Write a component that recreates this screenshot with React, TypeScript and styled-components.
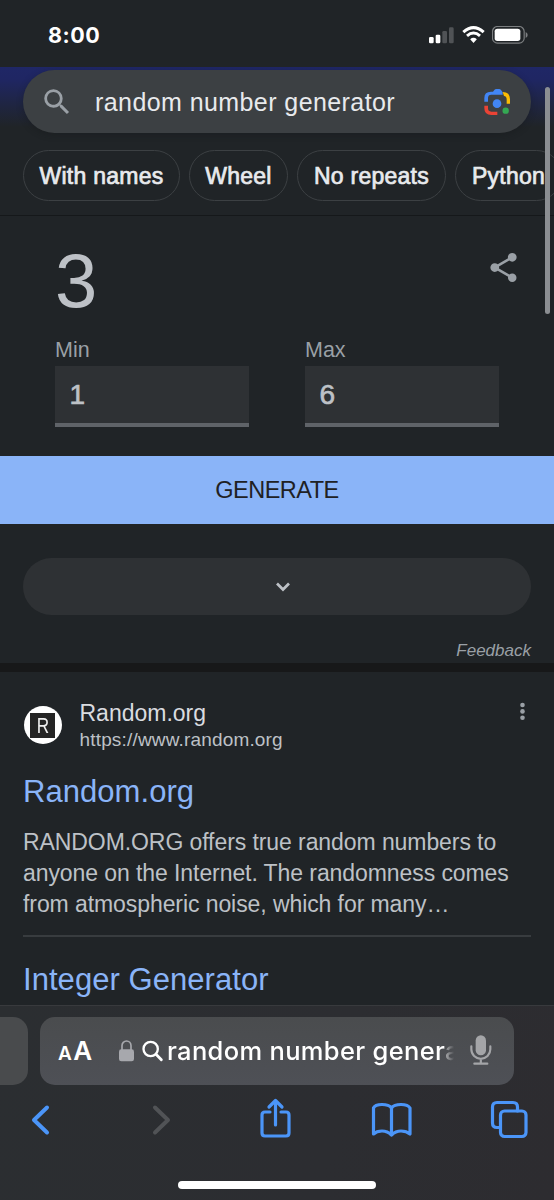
import React from 'react';
import styled, { createGlobalStyle } from 'styled-components';

const sans = '"Liberation Sans", Arial, sans-serif';
const system = 'Inter, "Liberation Sans", sans-serif';

const GlobalStyle = createGlobalStyle`
  *, *::before, *::after { box-sizing: border-box; }
  html, body { margin: 0; padding: 0; background: #202427; }
  body { overflow: hidden; font-family: ${sans}; }
  svg { display: block; flex: none; }
  button { appearance: none; border: 0; padding: 0; background: none; font: inherit; color: inherit; }
`;

const Phone = styled.div`
  position: relative;
  display: flex;
  flex-direction: column;
  width: 554px;
  height: 1200px;
  overflow: hidden;
  background: #202427;
`;

const StatusBar = styled.header`
  display: flex;
  flex: none;
  align-items: center;
  justify-content: space-between;
  height: 67px;
  padding: 3px 26px 0 48px;
`;

const Clock = styled.time`
  font: 700 21.5px/26px ${system};
  letter-spacing: 0.5px;
  color: #fff;
`;

const StatusIcons = styled.div`
  display: flex;
  align-items: center;
  gap: 7.5px;
`;

const Page = styled.main`
  display: flex;
  flex: 1;
  flex-direction: column;
  min-height: 0;
  overflow: hidden;
`;

const Masthead = styled.div`
  flex: none;
  height: 149px;
  padding-top: 3px;
  border-bottom: 1px solid #15181a;
  background: linear-gradient(#1f2766 0, #1f2663 12px, #1f253f 40px, #202427 60px);
`;

const SearchBox = styled.div`
  display: flex;
  align-items: center;
  height: 63px;
  margin: 0 23px;
  padding: 0 20px 0 17px;
  border-radius: 32px;
  background: #3c4043;
  box-shadow: 0 2px 6px rgba(20, 23, 26, 0.35);
`;

const Query = styled.span`
  flex: 1;
  padding: 1px 0 0 21px;
  font-size: 25px;
  line-height: 30px;
  letter-spacing: 0.42px;
  color: #e8eaed;
  white-space: nowrap;
`;

const Chips = styled.nav`
  display: flex;
  gap: 9px;
  margin: 17px 0 0 23px;
`;

const Chip = styled.a<{ $width: number }>`
  display: flex;
  flex: none;
  align-items: center;
  justify-content: center;
  width: ${(p) => p.$width}px;
  height: 51px;
  padding-top: 1px;
  border: 1px solid #3c4043;
  border-radius: 26px;
  font-size: 23px;
  letter-spacing: 0.25px;
  color: #e8eaed;
  -webkit-text-stroke: 0.7px #e8eaed;
  white-space: nowrap;
`;

const Generator = styled.section`
  flex: none;
  height: 240px;
  padding: 23px 33px 0 55px;
`;

const ResultRow = styled.div`
  display: flex;
  justify-content: space-between;
  height: 101px;
`;

const ResultNumber = styled.output`
  font-size: 76px;
  line-height: 84px;
  color: #bdc1c6;
`;

const ShareSlot = styled.button`
  height: 35px;
  margin-top: 11px;
`;

const Fields = styled.div`
  display: flex;
  gap: 56px;
`;

const Field = styled.label`
  display: flex;
  flex-direction: column;
  width: 194px;
`;

const FieldName = styled.span`
  height: 26px;
  font-size: 21.5px;
  line-height: 20px;
  color: #9aa0a6;
`;

const FieldValue = styled.span`
  display: flex;
  align-items: center;
  height: 61px;
  padding-left: 14.5px;
  border-bottom: 4px solid #5f6368;
  background: #2e3134;
  font-size: 28px;
  color: #bdc1c6;
  -webkit-text-stroke: 0.7px #bdc1c6;
`;

const GenerateButton = styled.button`
  flex: none;
  height: 68px;
  background: #8ab4f8;
  font-size: 23.5px;
  letter-spacing: -0.5px;
  color: #202124;
`;

const Expander = styled.button`
  display: flex;
  flex: none;
  align-items: center;
  justify-content: center;
  height: 57px;
  margin: 34px 23px 0;
  padding-left: 11px;
  border-radius: 29px;
  background: #2e3134;
`;

const Feedback = styled.a`
  flex: none;
  height: 48px;
  padding: 26px 23px 0 0;
  font-size: 17px;
  font-style: italic;
  line-height: 20px;
  text-align: right;
  color: #9aa0a6;
`;

const SectionGap = styled.div`
  flex: none;
  height: 9px;
  background: #171819;
`;

const SearchResult = styled.article`
  flex: none;
  padding: 0 23px;
`;

const Source = styled.div`
  display: flex;
  height: 102px;
  padding-top: 27px;
`;

const Favicon = styled.span`
  display: flex;
  align-items: center;
  justify-content: center;
  width: 38px;
  height: 38px;
  margin: 7px 18px 0 0.5px;
  border-radius: 50%;
  background: #fff;
`;

const FaviconTile = styled.span`
  display: flex;
  align-items: center;
  justify-content: center;
  width: 25px;
  height: 25px;
  background: #242424;
`;

const FaviconLetter = styled.span`
  font-size: 22px;
  line-height: 25px;
  color: #eee;
  transform: scaleX(0.78);
`;

const SourceText = styled.div`
  flex: 1;
`;

const SiteName = styled.div`
  font-size: 23px;
  line-height: 28px;
  color: #dadce0;
`;

const SiteUrl = styled.div`
  font-size: 19px;
  line-height: 26px;
  letter-spacing: 0.17px;
  color: #bdc1c6;
`;

const Title = styled.h3`
  margin: 0;
  font-size: 31px;
  font-weight: 400;
  line-height: 36px;
  letter-spacing: 0.05px;
  color: #8ab4f8;
`;

const Snippet = styled.p`
  height: 111px;
  margin: 16px 0 25px;
  padding-top: 1px;
  border-bottom: 2px solid #383c3f;
  font-size: 23px;
  line-height: 31px;
  letter-spacing: -0.08px;
  color: #bdc1c6;
  white-space: nowrap;
`;

const ScrollThumb = styled.div`
  position: absolute;
  top: 87px;
  right: 4px;
  width: 5px;
  height: 227px;
  border-radius: 3px;
  background: #8b8e92;
`;

const BrowserChrome = styled.footer`
  display: flex;
  flex: none;
  flex-direction: column;
  height: 195px;
  padding-top: 11px;
  border-top: 1px solid #383a3d;
  background: linear-gradient(100deg, #2b2e31, #2c2d31 60%, #2d2c30);
`;

const Tabs = styled.div`
  display: flex;
  gap: 12px;
  height: 68px;
`;

const PreviousTab = styled.div`
  width: 28px;
  border-radius: 0 15px 15px 0;
  background: #494b4d;
`;

const AddressBar = styled.div`
  display: flex;
  align-items: center;
  width: 474px;
  padding: 0 22px 0 18px;
  border-radius: 15px;
  background: linear-gradient(#4a4c4e, #4e5056);
`;

const PageSettings = styled.span`
  display: flex;
  align-items: baseline;
  width: 60px;
  padding-top: 3px;
  font: 600 26px/34px ${system};
  color: #fff;
`;

const SmallA = styled.span`
  margin-right: 1.5px;
  font-size: 19px;
`;

const Address = styled.span`
  flex: 1;
  min-width: 0;
  margin-left: 3px;
  overflow: hidden;
  font: 500 25.5px/34px ${system};
  letter-spacing: 0.33px;
  color: #fff;
  white-space: nowrap;
  mask-image: linear-gradient(to right, #000 277px, rgba(0, 0, 0, 0.5) 279px, transparent 287px);
`;

const Toolbar = styled.div`
  display: flex;
  justify-content: space-between;
  height: 96px;
  padding: 10px 21.5px 0 16px;
`;

const HomeIndicator = styled.div`
  width: 198px;
  height: 8px;
  margin-left: 178px;
  border-radius: 4px;
  background: #fff;
`;

const SignalIcon = () => (
  <svg width="25" height="18" viewBox="0 0 75 54">
    <g fill="#fff">
      <rect x="0" y="33" width="14" height="19" rx="4" />
      <rect x="20" y="26" width="14" height="26" rx="4" />
    </g>
    <g fill="#505356">
      <rect x="40" y="15" width="14" height="37" rx="4" />
      <rect x="60" y="4" width="14" height="48" rx="4" />
    </g>
  </svg>
);

const WifiIcon = () => (
  <svg width="23" height="18" viewBox="0 0 69 54">
    <g fill="none" stroke="#fff" strokeWidth="9">
      <path d="M4 18.500Q34.500-8.500 65 18.500" />
      <path d="M15 29.500Q34.500 12.500 54 29.500" />
    </g>
    <path d="M24.500 39.500Q34.500 31.500 44.500 39.500L34.500 51Z" fill="#fff" />
  </svg>
);

const BatteryIcon = () => (
  <svg width="36" height="18" viewBox="0 0 108 54">
    <rect x="1.500" y="1.500" width="95" height="50" rx="15" fill="none" stroke="#7c7f81" strokeWidth="3.500" />
    <rect x="8" y="8" width="77" height="37" rx="8" fill="#fff" />
    <path d="M101 18q6 3 6 9t-6 9Z" fill="#7c7f81" />
  </svg>
);

const SearchIcon = () => (
  <svg width="34" height="34" viewBox="0 0 24 24" fill="#9aa0a6">
    <path d="M15.5 14h-.79l-.28-.27A6.471 6.471 0 0 0 16 9.500 6.500 6.500 0 1 0 9.500 16c1.610 0 3.090-.59 4.230-1.570l.27.28v.79l5 4.990L20.490 19l-4.990-5zm-6 0C7.010 14 5 11.990 5 9.500S7.010 5 9.500 5 14 7.010 14 9.500 11.990 14 9.500 14z" />
  </svg>
);

const LensIcon = () => (
  <svg width="28" height="28" viewBox="618 262 84 84">
    <path d="M648 273l4-5q2-3 6-3h8q4 0 6 3l5 7v7h-34q-10 0-10 10v11h-11v-11q0-19 20-19Z" fill="#4285f4" />
    <path d="M677 274q22 0 22 22v13h-10v-13q0-9-8-10Z" fill="#fbbc04" />
    <path d="M622 315h11v8q0 10 10 10h18v10h-18q-21 0-21-20Z" fill="#ea4335" />
    <circle cx="660" cy="309" r="13" fill="#4285f4" />
    <circle cx="686" cy="330" r="9.500" fill="#34a853" />
  </svg>
);

const ShareNodesIcon = () => (
  <svg width="35" height="35" viewBox="0 0 24 24" fill="#9aa0a6">
    <path d="M18 16.080c-.76 0-1.440.3-1.960.77L8.910 12.700c.05-.23.09-.46.09-.7s-.04-.47-.09-.7l7.050-4.110c.54.5 1.250.81 2.040.81 1.660 0 3-1.340 3-3s-1.340-3-3-3-3 1.340-3 3c0 .24.04.47.09.7L8.040 9.810C7.500 9.310 6.790 9 6 9c-1.660 0-3 1.340-3 3s1.340 3 3 3c.79 0 1.500-.31 2.040-.81l7.120 4.160c-.05.21-.08.43-.08.65 0 1.610 1.310 2.920 2.920 2.920s2.920-1.310 2.920-2.920-1.310-2.920-2.920-2.920z" />
  </svg>
);

const ChevronDownIcon = () => (
  <svg width="16" height="12" viewBox="0 0 16 12">
    <path d="M2 2.500L8 8.500 14 2.500" fill="none" stroke="#bdc1c6" strokeWidth="2.700" />
  </svg>
);

const MoreIcon = () => (
  <svg width="17" height="24" viewBox="0 0 17 24" fill="#9aa0a6">
    <circle cx="8.500" cy="6" r="2.300" />
    <circle cx="8.500" cy="12.400" r="2.300" />
    <circle cx="8.500" cy="18.800" r="2.300" />
  </svg>
);

const LockIcon = () => (
  <svg width="17" height="22" viewBox="0 0 51 66">
    <path d="M12 31V17a13.500 14 0 0 1 27 0v14" fill="none" stroke="#a7a8ad" strokeWidth="5" />
    <rect x="3" y="28" width="45" height="36" rx="7" fill="#a7a8ad" />
  </svg>
);

const MagnifierSvg = styled.svg`
  margin-left: 7px;
`;

const MagnifierIcon = () => (
  <MagnifierSvg width="22" height="22" viewBox="0 0 66 66" fill="none" stroke="#fff" strokeWidth="7" strokeLinecap="round">
    <circle cx="26" cy="27" r="21.500" />
    <path d="M42 43L58 59" strokeWidth="8.500" />
  </MagnifierSvg>
);

const MicIcon = () => (
  <svg width="22" height="32" viewBox="0 0 66 96">
    <rect x="17" y="1" width="31" height="60" rx="15.500" fill="#a4a5a8" />
    <path d="M4 34v9a28.500 28.500 0 0 0 57 0v-9M32.500 72v13M13 86h39" fill="none" stroke="#a4a5a8" strokeWidth="6.500" strokeLinecap="round" />
  </svg>
);

const ToolIcon = styled.svg.attrs({ width: 48, height: 48, viewBox: '0 0 48 48' })<{
  $muted?: boolean;
  $weight?: number;
}>`
  fill: none;
  stroke: ${(p) => (p.$muted ? '#515356' : '#4b95f8')};
  stroke-width: ${(p) => p.$weight ?? 3.200}px;
  stroke-linecap: round;
  stroke-linejoin: round;
`;

export default function App() {
  return (
    <Phone>
      <GlobalStyle />
      <StatusBar>
        <Clock>8:00</Clock>
        <StatusIcons>
          <SignalIcon />
          <WifiIcon />
          <BatteryIcon />
        </StatusIcons>
      </StatusBar>

      <Page>
        <Masthead>
          <SearchBox>
            <SearchIcon />
            <Query>random number generator</Query>
            <LensIcon />
          </SearchBox>
          <Chips>
            <Chip $width={157}>With names</Chip>
            <Chip $width={99}>Wheel</Chip>
            <Chip $width={149}>No repeats</Chip>
            <Chip $width={107}>Python</Chip>
          </Chips>
        </Masthead>

        <Generator>
          <ResultRow>
            <ResultNumber>3</ResultNumber>
            <ShareSlot aria-label="Share"><ShareNodesIcon /></ShareSlot>
          </ResultRow>
          <Fields>
            <Field>
              <FieldName>Min</FieldName>
              <FieldValue>1</FieldValue>
            </Field>
            <Field>
              <FieldName>Max</FieldName>
              <FieldValue>6</FieldValue>
            </Field>
          </Fields>
        </Generator>
        <GenerateButton>GENERATE</GenerateButton>
        <Expander aria-label="Expand"><ChevronDownIcon /></Expander>
        <Feedback>Feedback</Feedback>
        <SectionGap />

        <SearchResult>
          <Source>
            <Favicon><FaviconTile><FaviconLetter>R</FaviconLetter></FaviconTile></Favicon>
            <SourceText>
              <SiteName>Random.org</SiteName>
              <SiteUrl>https://www.random.org</SiteUrl>
            </SourceText>
            <MoreIcon />
          </Source>
          <Title>Random.org</Title>
          <Snippet>
            RANDOM.ORG offers true random numbers to<br />
            anyone on the Internet. The randomness comes<br />
            from atmospheric noise, which for many…
          </Snippet>
          <Title>Integer Generator</Title>
        </SearchResult>
      </Page>

      <BrowserChrome>
        <Tabs>
          <PreviousTab />
          <AddressBar>
            <PageSettings><SmallA>A</SmallA>A</PageSettings>
            <LockIcon />
            <MagnifierIcon />
            <Address>random number generator</Address>
            <MicIcon />
          </AddressBar>
        </Tabs>
        <Toolbar>
          <ToolIcon $weight={4}><path d="M31 12.500L18 25l13 12.500" /></ToolIcon>
          <ToolIcon $muted $weight={4}><path d="M22 12.500l13 12.500-13 12.500" /></ToolIcon>
          <ToolIcon>
            <path d="M20 17h-5q-3 0-3 3v18q0 3 3 3h21q3 0 3-3V20q0-3-3-3h-5M25.500 30V6M19 12l6.500-6.500L32 12" />
          </ToolIcon>
          <ToolIcon>
            <path d="M24.500 13Q22 9.500 15 9.500T6.500 13v26Q9.500 36 15 36t9.500 4Q28.500 36 34 36t9 3V13q-2-3.500-9-3.500T24.500 13v27" />
          </ToolIcon>
          <ToolIcon>
            <rect x="15.500" y="16" width="25.500" height="25.500" rx="4" />
            <path d="M15 32.500h-3q-4.500 0-4.500-4.500V12q0-4.500 4.500-4.500h16q4.500 0 4.500 4.500v4" />
          </ToolIcon>
        </Toolbar>
        <HomeIndicator />
      </BrowserChrome>
      <ScrollThumb />
    </Phone>
  );
}
